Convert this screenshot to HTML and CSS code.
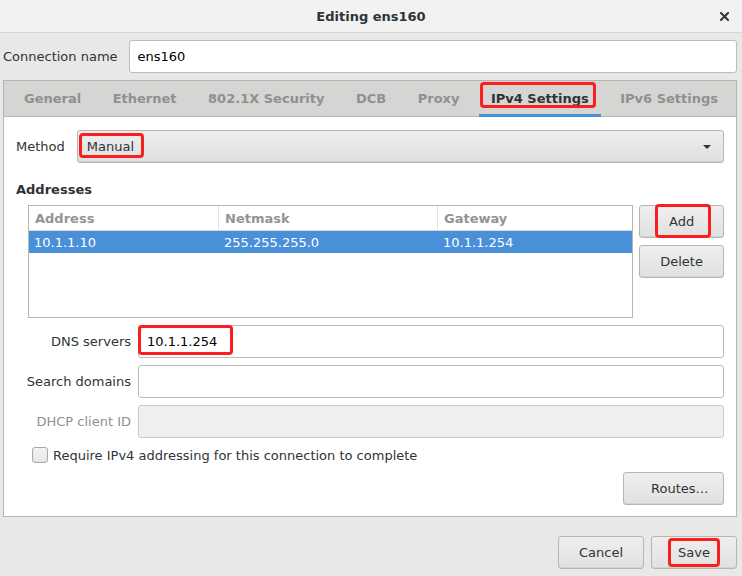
FILE: index.html
```html
<!DOCTYPE html>
<html lang="en">
<head>
  <meta charset="UTF-8" />
  <title>Editing ens160</title>
  <link rel="stylesheet" href="styles.css">
</head>
<body>
  <div class="window">
    <header class="titlebar">
      <span class="title">Editing ens160</span>
      <span class="close">
        <svg width="9" height="9" viewBox="0 0 9 9"><path d="M1 1L8 8M8 1L1 8" stroke="#2e3436" stroke-width="2" stroke-linecap="square"/></svg>
      </span>
    </header>

    <div class="dialog">
      <div class="name-row">
        <span class="label">Connection name</span>
        <div class="entry">ens160</div>
      </div>

      <div class="notebook">
        <div class="tabs">
          <span class="tab">General</span>
          <span class="tab">Ethernet</span>
          <span class="tab">802.1X Security</span>
          <span class="tab">DCB</span>
          <span class="tab">Proxy</span>
          <span class="tab active"><span class="mark mark-tab">IPv4 Settings</span></span>
          <span class="tab">IPv6 Settings</span>
        </div>

        <div class="page">
          <div class="method-row">
            <span class="label">Method</span>
            <div class="combo">
              <span class="mark mark-method">Manual</span>
              <svg class="arrow" width="10" height="6" viewBox="0 0 10 6"><path d="M1 1h8L5 5z" fill="#2e3436"/></svg>
            </div>
          </div>

          <div class="section-title">Addresses</div>

          <div class="addresses">
            <div class="table">
              <div class="thead">
                <span class="col col-addr">Address</span>
                <span class="col col-mask">Netmask</span>
                <span class="col col-gw">Gateway</span>
              </div>
              <div class="row selected">
                <span class="col col-addr">10.1.1.10</span>
                <span class="col col-mask">255.255.255.0</span>
                <span class="col col-gw">10.1.1.254</span>
              </div>
            </div>
            <div class="side-buttons">
              <button class="btn"><span class="mark mark-add">Add</span></button>
              <button class="btn">Delete</button>
            </div>
          </div>

          <div class="form">
            <span class="label right">DNS servers</span>
            <div class="entry"><span class="mark mark-dns">10.1.1.254</span></div>

            <span class="label right">Search domains</span>
            <div class="entry"></div>

            <span class="label right dim">DHCP client ID</span>
            <div class="entry disabled"></div>
          </div>

          <label class="check-row">
            <span class="checkbox"></span>
            Require IPv4 addressing for this connection to complete
          </label>

          <div class="routes-row">
            <button class="btn routes">Routes…</button>
          </div>
        </div>
      </div>

      <div class="actions">
        <button class="btn action">Cancel</button>
        <button class="btn action"><span class="mark mark-save">Save</span></button>
      </div>
    </div>
  </div>
</body>
</html>
```

FILE: styles.css
```css
* {
  box-sizing: border-box;
}

body {
  margin: 0;
  font-family: "DejaVu Sans", "Liberation Sans", sans-serif;
  font-size: 13px;
  color: #2e3436;
  background: #e8e8e7;
}

.window {
  width: 742px;
  height: 576px;
  background: #e8e8e7;
}

.titlebar {
  position: relative;
  height: 33px;
  background: #f2f2f2;
  border-bottom: 1px solid #d4d4d2;
  display: flex;
  align-items: center;
  justify-content: center;
}

.title {
  font-weight: bold;
}

.close {
  position: absolute;
  right: 13px;
  top: 12px;
  line-height: 0;
}

.dialog {
  padding: 7px 5px 7px 3px;
}

.name-row {
  display: flex;
  align-items: center;
  gap: 11px;
}

.label {
  flex: none;
  line-height: 15px;
  white-space: nowrap;
}

.entry {
  flex: 1;
  height: 33px;
  background: #fff;
  border: 1px solid #bcbcb9;
  border-radius: 3px;
  padding: 0 8px;
  display: flex;
  align-items: center;
  color: #000;
  line-height: 15px;
}

.entry.disabled {
  background: #f0f0f0;
  border-color: #c8c8c6;
}

.notebook {
  margin-top: 7px;
  border: 1px solid #b6b6b3;
  background: #fff;
}

.tabs {
  height: 36px;
  background: #d5d5d4;
  border-bottom: 1px solid #b6b6b3;
  display: flex;
  gap: 7.5px;
  padding-left: 8px;
}

.tab {
  padding: 0 12px;
  display: flex;
  align-items: center;
  font-weight: bold;
  color: #8f9090;
  line-height: 15px;
  padding-top: 2px;
  border-bottom: 3px solid transparent;
  margin-bottom: -1px;
  white-space: nowrap;
}

.tab.active {
  color: #2e3436;
  border-bottom-color: #4a90d9;
}

.page {
  padding: 13px 12px 11px 12px;
}

.method-row {
  display: flex;
  align-items: center;
  gap: 12px;
}

.combo {
  flex: 1;
  height: 33px;
  border: 1px solid #b6b6b3;
  border-radius: 3px;
  background: linear-gradient(#eeeeee, #e0e0e0);
  box-shadow: inset 0 -1px 0 #d0d0d0;
  display: flex;
  align-items: center;
  justify-content: space-between;
  padding: 0 11px 0 9px;
  line-height: 15px;
}

.section-title {
  font-weight: bold;
  line-height: 16px;
  margin-top: 19px;
}

.addresses {
  display: flex;
  gap: 6px;
  margin-top: 7px;
  margin-left: 12px;
}

.table {
  width: 606px;
  height: 113px;
  border: 1px solid #b6b6b3;
  background: #fff;
}

.thead,
.row {
  display: flex;
}

.thead {
  height: 25px;
  border-bottom: 1px solid #dcdcdc;
  font-weight: bold;
  color: #939595;
}

.thead .col {
  border-right: 1px solid #e4e4e4;
  padding-top: 1px;
}

.thead .col-gw {
  border-right: none;
}

.col {
  display: flex;
  align-items: center;
  padding-left: 6px;
  white-space: nowrap;
}

.col-addr {
  width: 190px;
}

.col-mask {
  width: 219px;
}

.col-gw {
  flex: 1;
}

.row {
  height: 22px;
}

.row .col {
  padding-left: 5px;
}

.row.selected {
  background: #4a90d9;
  color: #fff;
}

.side-buttons {
  display: flex;
  flex-direction: column;
  gap: 7px;
  width: 85px;
}

.btn {
  height: 33px;
  border: 1px solid #b6b6b3;
  border-radius: 3px;
  background: linear-gradient(#efefef, #e1e1e1);
  box-shadow: inset 0 -1px 0 #d2d2d2;
  font-family: inherit;
  font-size: 13px;
  color: #2e3436;
  padding: 0;
  line-height: 15px;
}

.form {
  display: grid;
  grid-template-columns: 103px 1fr;
  column-gap: 7px;
  row-gap: 7px;
  align-items: center;
  margin-top: 7px;
  margin-left: 12px;
}

.label.right {
  text-align: right;
  direction: rtl;
}

.label.dim {
  color: #8d9091;
}

.check-row {
  display: flex;
  align-items: center;
  gap: 5px;
  height: 18px;
  margin-top: 8px;
  margin-left: 16px;
  line-height: 15px;
}

.checkbox {
  width: 16px;
  height: 16px;
  border: 1px solid #a9a9a6;
  border-radius: 3px;
  background: linear-gradient(#f4f4f4, #e4e4e4);
}

.routes-row {
  display: flex;
  justify-content: flex-end;
  margin-top: 8px;
}

.routes {
  width: 101px;
  padding: 0 15px 0 27px;
}

.actions {
  display: flex;
  justify-content: flex-end;
  gap: 7px;
  margin-top: 19px;
}

.action {
  width: 86px;
}

/* red annotation boxes drawn over the screenshot */
.mark {
  position: relative;
}

.mark::after {
  content: '';
  position: absolute;
  border: 3px solid #fb1e1e;
  border-radius: 4px;
}

.mark-tab::after {
  inset: -9px -7px -2px -11px;
}

.mark-method::after {
  inset: -6px -10px -4px -8px;
}

.mark-add::after {
  inset: -10px -17px -9px -14px;
}

.mark-dns::after {
  inset: -9px -16px -6px -9px;
}

.mark-save::after {
  inset: -7px -10px -7px -10px;
}
```
